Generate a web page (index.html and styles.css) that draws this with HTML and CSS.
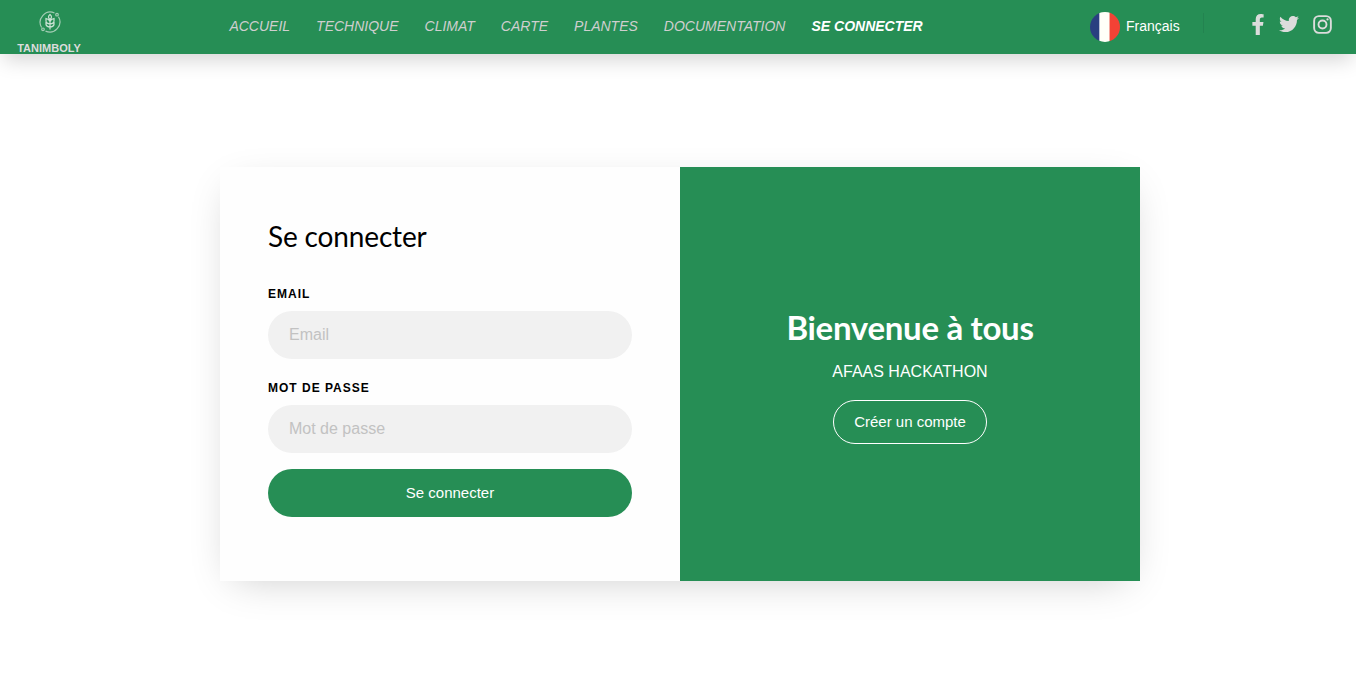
FILE: index.html
```
<!DOCTYPE html>
<html lang="fr">
<head>
<meta charset="utf-8">
<title>Tanimboly</title>
<link rel="stylesheet" href="styles.css">
</head>
<body>
<header class="navbar">
  <a class="brand">
    <svg class="brand-logo" viewBox="0 0 24 24">
      <path d="M16.500 3A10.200 10.200 0 0 0 3.600 17.500M7.500 21.100A10.200 10.200 0 0 0 20.500 6.700"/>
      <circle cx="19" cy="4.700" r="1.300"/><circle cx="5" cy="19.300" r="1.300"/>
      <path class="wheat" d="M12 19.500V9M12 4.500c-2 1.700-2 3.500 0 5c2-1.500 2-3.300 0-5zM8 8.500v2.500q0 2.500 4 3q4-.5 4-3V8.500q-3 .5-4 3q-1-2.500-4-3zM8 12v2.500q.5 2.200 4 2.500q3.500-.3 4-2.500V12"/>
    </svg>
    <span class="brand-name">TANIMBOLY</span>
  </a>
  <nav class="menu">
    <a>ACCUEIL</a><a>TECHNIQUE</a><a>CLIMAT</a><a>CARTE</a><a>PLANTES</a><a>DOCUMENTATION</a><a class="active">SE CONNECTER</a>
  </nav>
  <div class="language"><span class="flag"></span><span class="language-name">Français</span></div>
  <div class="social">
    <svg class="facebook" viewBox="22.900 0 274.200 512"><path d="M279.140 288l14.220-92.660h-88.910v-60.130c0-25.350 12.420-50.060 52.240-50.060h40.420V6.260S260.430 0 225.360 0c-73.220 0-121.080 44.380-121.080 124.720v70.620H22.890V288h81.390v224h100.170V288z"/></svg>
    <svg class="twitter" viewBox="0 0 512 512"><path d="M459.370 151.716c.325 4.548.325 9.097.325 13.645 0 138.720-105.583 298.558-298.558 298.558-59.452 0-114.680-17.219-161.137-47.106 8.447.974 16.568 1.299 25.340 1.299 49.055 0 94.213-16.568 130.274-44.832-46.132-.975-84.792-31.188-98.112-72.772 6.498.974 12.995 1.624 19.818 1.624 9.421 0 18.843-1.300 27.614-3.573-48.081-9.747-84.143-51.980-84.143-102.985v-1.299c13.969 7.797 30.214 12.670 47.431 13.319-28.264-18.843-46.781-51.005-46.781-87.391 0-19.492 5.197-37.360 14.294-52.954 51.655 63.675 129.300 105.258 216.365 109.807-1.624-7.797-2.599-15.918-2.599-24.040 0-57.828 46.782-104.934 104.934-104.934 30.213 0 57.502 12.670 76.670 33.137 23.715-4.548 46.456-13.320 66.599-25.340-7.798 24.366-24.366 44.833-46.132 57.827 21.117-2.273 41.584-8.122 60.426-16.243-14.292 20.791-32.161 39.308-52.628 54.253z"/></svg>
    <svg class="instagram" viewBox="0 0 20 20"><rect x="1.200" y="1.200" width="17.600" height="17.600" rx="5"/><circle cx="10" cy="10" r="4.200"/><circle class="dot" cx="15.300" cy="4.700" r="1.200"/></svg>
  </div>
</header>
<main class="card">
  <form class="login">
    <h3 class="login-title">Se connecter</h3>
    <label class="label" for="email">EMAIL</label>
    <input class="field" id="email" type="text" placeholder="Email">
    <label class="label" for="password">MOT DE PASSE</label>
    <input class="field" id="password" type="password" placeholder="Mot de passe">
    <button class="submit" type="button">Se connecter</button>
  </form>
  <section class="welcome">
    <h2 class="welcome-title">Bienvenue à tous</h2>
    <p class="welcome-text">AFAAS HACKATHON</p>
    <a class="signup">Créer un compte</a>
  </section>
</main>
</body>
</html>
```
FILE: styles.css
```
* { box-sizing: border-box; }
body {
  margin: 0;
  min-height: 100vh;
  background: #fff;
  color: #000;
  font-family: "Liberation Sans", Arial, sans-serif;
  font-size: 16px;
  overflow: hidden;
}
.navbar {
  height: 54px;
  display: flex;
  align-items: flex-start;
  background: #268e55;
  box-shadow: 0 10px 20px -4px rgba(0, 0, 0, .17);
}
.brand {
  width: 98px;
  padding-top: 10px;
  display: flex;
  flex-direction: column;
  align-items: center;
}
.brand-logo {
  width: 24px;
  height: 24px;
  margin-left: 2px;
  fill: none;
  stroke: #a3cdb4;
  stroke-width: 1.2;
}
.wheat { stroke: #cbe2d4; }
.brand-name {
  margin-top: 8px;
  font-size: 11px;
  line-height: 12px;
  font-weight: 700;
  color: #dcdcdc;
}
.menu {
  width: 992px;
  padding: 18px 0 0 131.400px;
  display: flex;
  gap: 26px;
  font-size: 14px;
  line-height: 16px;
  font-style: italic;
  color: #cfcfcf;
  white-space: nowrap;
}
.active { font-weight: 700; color: #fff; }
.language {
  width: 114px;
  height: 20px;
  margin-top: 13px;
  display: flex;
  align-items: center;
  gap: 6px;
  border-right: 1px solid #238350;
  font-size: 14px;
  color: #fff;
}
.language-name { padding-top: 6px; }
.flag {
  width: 30px;
  height: 30px;
  margin-top: 8px;
  border-radius: 50%;
  background: linear-gradient(90deg, #293f80 0 9px, #b9bfd3 9px 10px, #fffff8 10px 19px, #f6aaa0 19px 20px, #f34235 20px);
}
.social {
  padding: 14px 0 0 48px;
  display: flex;
  align-items: flex-start;
  fill: #dcdcdc;
}
.facebook { width: 12px; height: 21px; }
.twitter { width: 20px; height: 20px; margin: 0 0 0 15px; }
.instagram { width: 19px; height: 19px; margin: 1px 0 0 14px; fill: none; stroke: #dcdcdc; stroke-width: 2; }
.dot { fill: #dcdcdc; stroke: none; }
.card {
  width: 920px;
  height: 414px;
  margin: 113px 0 0 220px;
  display: flex;
  box-shadow: 0 10px 40px -14px rgba(0, 0, 0, .23);
}
.login {
  width: 460px;
  padding: 48px;
  display: flex;
  flex-direction: column;
  background: #fefefe;
}
.login-title {
  margin: 0 0 30px;
  font: 400 28px/42px Lato, sans-serif;
  letter-spacing: -.15px;
}
.label {
  margin-bottom: 10px;
  font-size: 12px;
  line-height: 14px;
  font-weight: 700;
  letter-spacing: 1px;
}
.field {
  height: 48px;
  margin: 0 0 22px;
  padding: 0 21px;
  border: 0;
  border-radius: 24px;
  background: #f1f1f1;
  font: 16px "Liberation Sans", Arial, sans-serif;
}
.field::placeholder { color: #c2c2c2; opacity: 1; }
.submit {
  height: 48px;
  margin-top: -6px;
  padding: 0 0 2px;
  border: 0;
  border-radius: 24px;
  background: #268e55;
  color: #fff;
  font: 15px "Liberation Sans", Arial, sans-serif;
}
.welcome {
  width: 460px;
  padding-top: 136px;
  display: flex;
  flex-direction: column;
  align-items: center;
  background: #268e55;
  color: #fff;
}
.welcome-title {
  margin: 0;
  font: 700 33px/48px Lato, sans-serif;
  letter-spacing: -.3px;
}
.welcome-text { margin: 12px 0 19px; line-height: 18px; }
.signup {
  width: 154px;
  height: 44px;
  border: 1px solid #fff;
  border-radius: 22px;
  text-align: center;
  font-size: 15px;
  line-height: 42px;
}
```
